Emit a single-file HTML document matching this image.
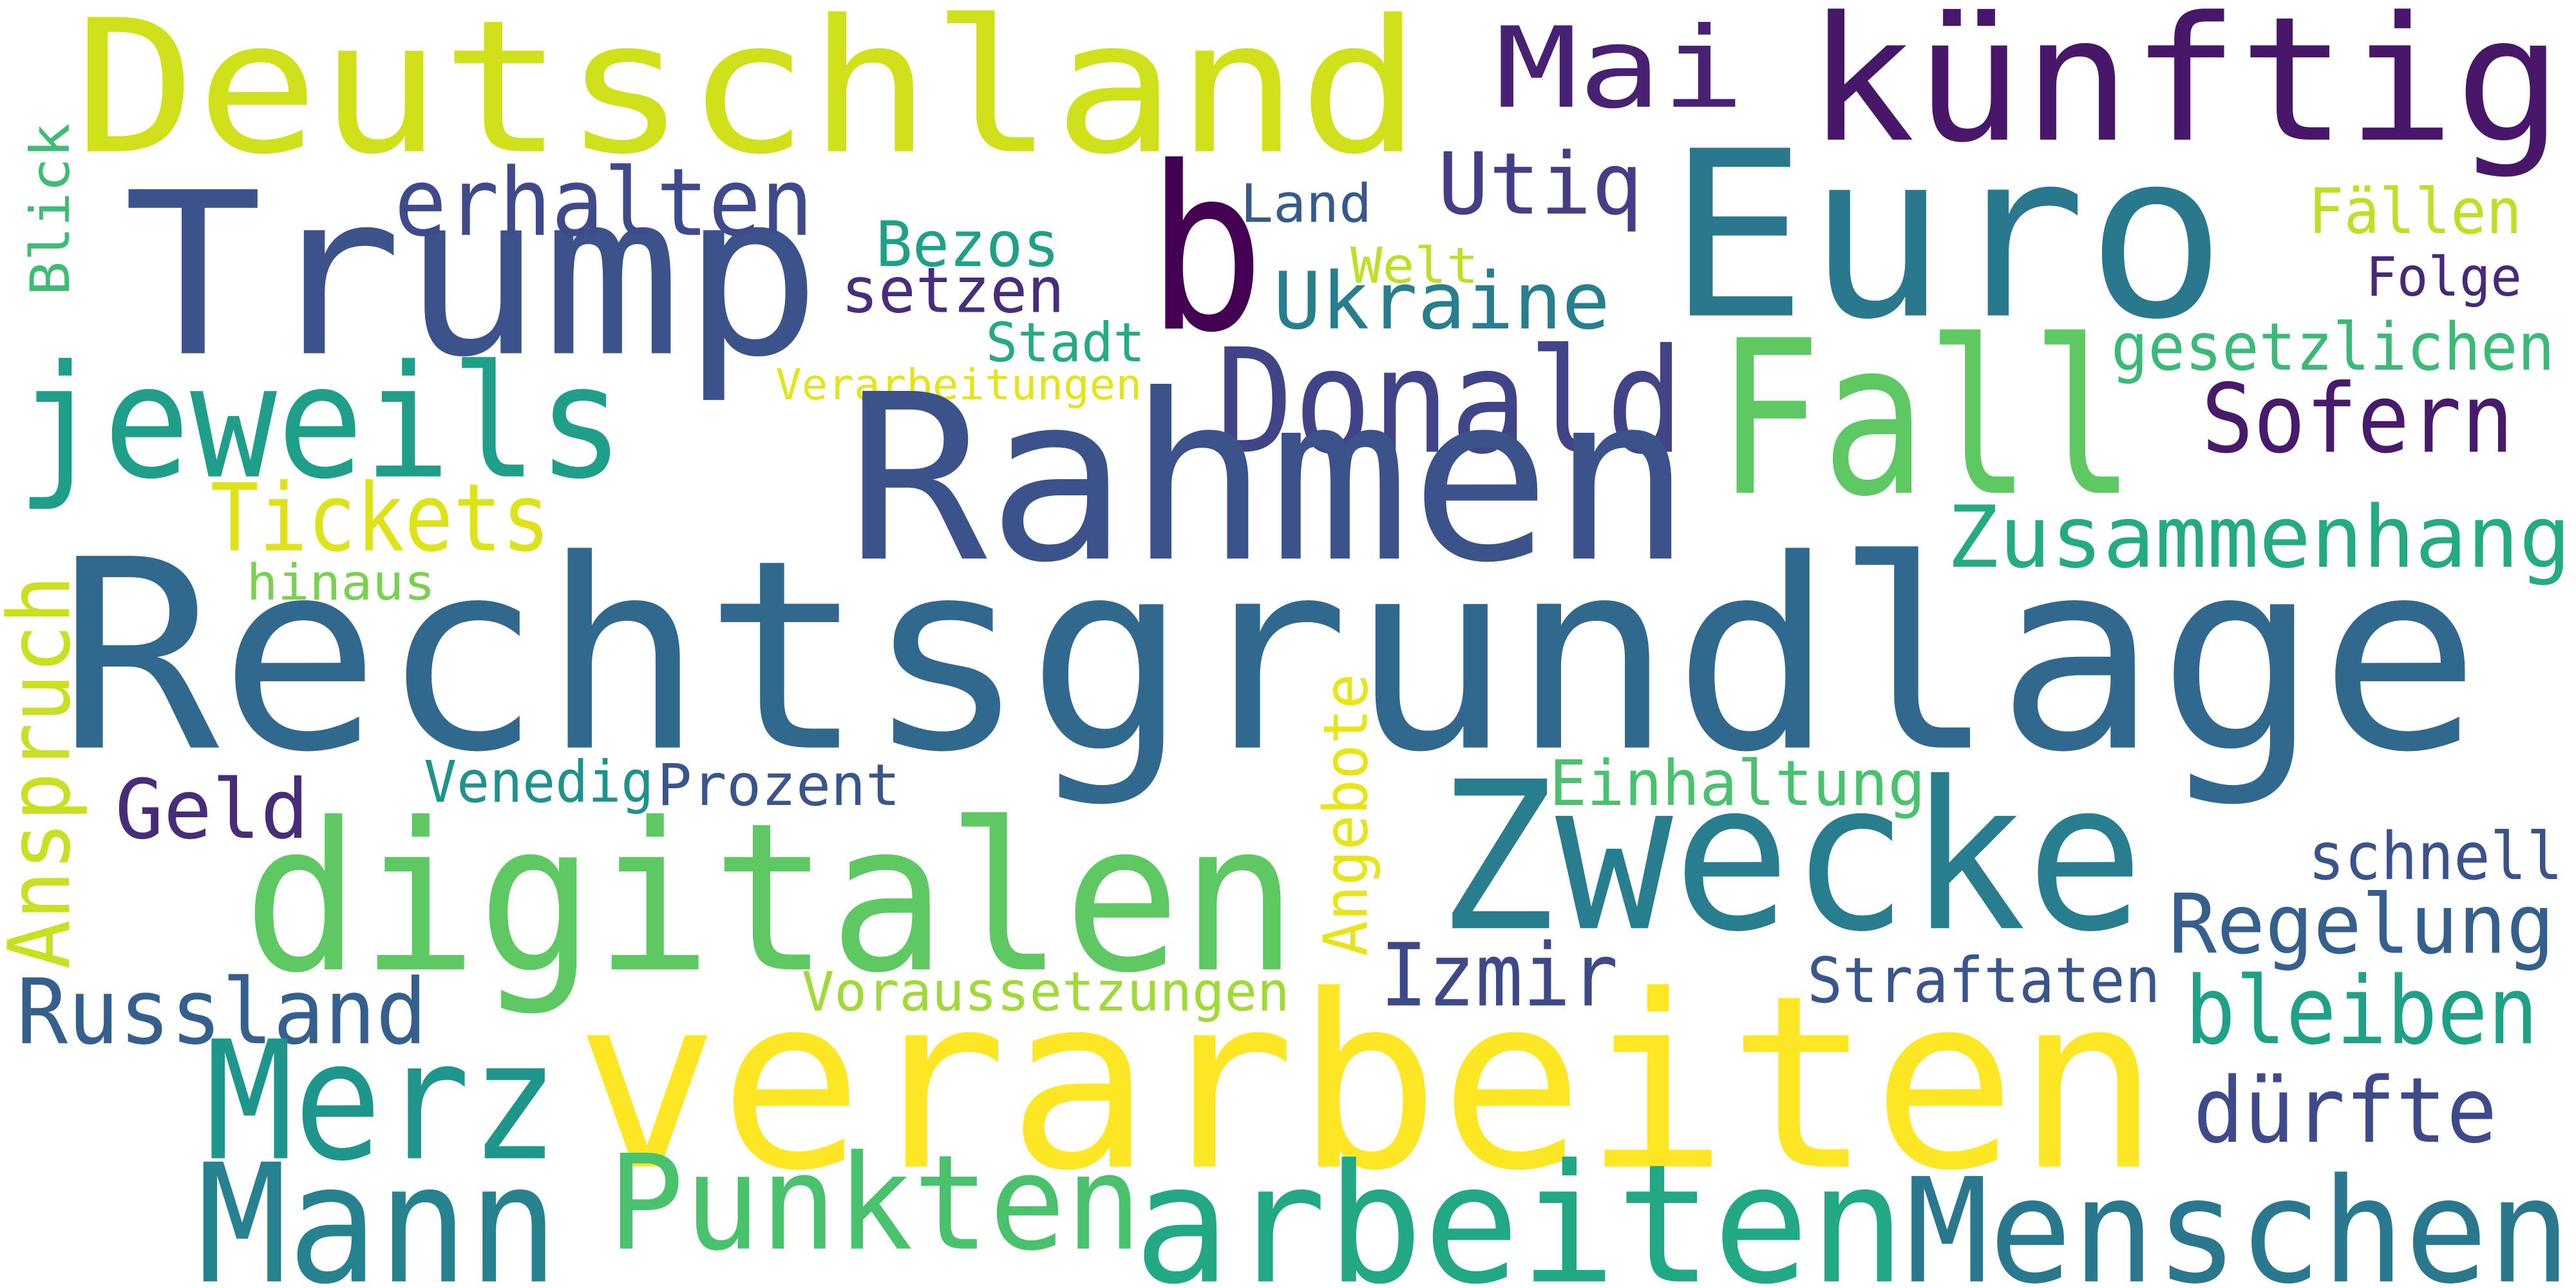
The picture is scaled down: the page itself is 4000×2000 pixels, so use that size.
<!DOCTYPE html>
<html><head><meta charset="utf-8"><style>
html,body{margin:0;padding:0;background:#fff;}
svg{display:block}
text{font-family:"DejaVu Sans Mono","Liberation Mono",monospace;}
</style></head><body>
<svg width="4000" height="2000" viewBox="0 0 1568 784" xmlns="http://www.w3.org/2000/svg">
<rect width="1568" height="784" fill="#fff"/>
<g lengthAdjust="spacingAndGlyphs">
<text x="45" y="92" font-size="112" fill="#d0e11c" textLength="820" lengthAdjust="spacingAndGlyphs">Deutschland</text>
<text x="1100" y="85" font-size="105" fill="#481769" textLength="460" lengthAdjust="spacingAndGlyphs">künftig</text>
<text x="910" y="65" font-size="68" fill="#482173" textLength="152" lengthAdjust="spacingAndGlyphs">Mai</text>
<text x="75" y="215" font-size="137" fill="#3b528b" textLength="425" lengthAdjust="spacingAndGlyphs">Trump</text>
<text x="698" y="200" font-size="138" fill="#440154" textLength="72" lengthAdjust="spacingAndGlyphs">b</text>
<text x="1015" y="192" font-size="140" fill="#2a788e" textLength="340" lengthAdjust="spacingAndGlyphs">Euro</text>
<text x="240" y="143" font-size="57" fill="#3e4a89" textLength="255" lengthAdjust="spacingAndGlyphs">erhalten</text>
<text x="875" y="130" font-size="52" fill="#433e85" textLength="125" lengthAdjust="spacingAndGlyphs">Utiq</text>
<text x="755" y="135" font-size="32" fill="#38598c" textLength="80" lengthAdjust="spacingAndGlyphs">Land</text>
<text x="533" y="162" font-size="38" fill="#1fa187" textLength="112" lengthAdjust="spacingAndGlyphs">Bezos</text>
<text x="822" y="172" font-size="30" fill="#bddf26" textLength="78" lengthAdjust="spacingAndGlyphs">Welt</text>
<text x="1405" y="142" font-size="38" fill="#bddf26" textLength="130" lengthAdjust="spacingAndGlyphs">Fällen</text>
<text x="1440" y="180" font-size="33" fill="#482878" textLength="95" lengthAdjust="spacingAndGlyphs">Folge</text>
<text transform="translate(42,180) rotate(-90)" font-size="33" fill="#3fbc73" textLength="105" lengthAdjust="spacingAndGlyphs">Blick</text>
<text x="512" y="190" font-size="38" fill="#472d7b" textLength="136" lengthAdjust="spacingAndGlyphs">setzen</text>
<text x="775" y="200" font-size="48" fill="#277f8e" textLength="205" lengthAdjust="spacingAndGlyphs">Ukraine</text>
<text x="600" y="220" font-size="33" fill="#25ab82" textLength="97" lengthAdjust="spacingAndGlyphs">Stadt</text>
<text x="472" y="243" font-size="26" fill="#e5e419" textLength="223" lengthAdjust="spacingAndGlyphs">Verarbeitungen</text>
<text x="1285" y="225" font-size="40" fill="#3aba76" textLength="270" lengthAdjust="spacingAndGlyphs">gesetzlichen</text>
<text x="740" y="275" font-size="88" fill="#414487" textLength="285" lengthAdjust="spacingAndGlyphs">Donald</text>
<text x="1045" y="300" font-size="130" fill="#5ec962" textLength="255" lengthAdjust="spacingAndGlyphs">Fall</text>
<text x="10" y="290" font-size="95" fill="#1f9e89" textLength="370" lengthAdjust="spacingAndGlyphs">jeweils</text>
<text x="1340" y="275" font-size="58" fill="#481a6c" textLength="190" lengthAdjust="spacingAndGlyphs">Sofern</text>
<text x="515" y="340" font-size="140" fill="#3b528b" textLength="515" lengthAdjust="spacingAndGlyphs">Rahmen</text>
<text x="128" y="335" font-size="57" fill="#dde318" textLength="207" lengthAdjust="spacingAndGlyphs">Tickets</text>
<text x="1185" y="345" font-size="52" fill="#25ab82" textLength="380" lengthAdjust="spacingAndGlyphs">Zusammenhang</text>
<text x="150" y="365" font-size="30" fill="#7ad151" textLength="115" lengthAdjust="spacingAndGlyphs">hinaus</text>
<text x="35" y="455" font-size="160" fill="#31688e" textLength="1475" lengthAdjust="spacingAndGlyphs">Rechtsgrundlage</text>
<text transform="translate(42,590) rotate(-90)" font-size="52" fill="#c8e020" textLength="240" lengthAdjust="spacingAndGlyphs">Anspruch</text>
<text transform="translate(832,582) rotate(-90)" font-size="37" fill="#e7e419" textLength="172" lengthAdjust="spacingAndGlyphs">Angebote</text>
<text x="258" y="488" font-size="35" fill="#20928c" textLength="140" lengthAdjust="spacingAndGlyphs">Venedig</text>
<text x="400" y="490" font-size="35" fill="#39558c" textLength="148" lengthAdjust="spacingAndGlyphs">Prozent</text>
<text x="70" y="510" font-size="50" fill="#472c7a" textLength="118" lengthAdjust="spacingAndGlyphs">Geld</text>
<text x="943" y="490" font-size="38" fill="#4ac16d" textLength="229" lengthAdjust="spacingAndGlyphs">Einhaltung</text>
<text x="148" y="590" font-size="125" fill="#5ec962" textLength="642" lengthAdjust="spacingAndGlyphs">digitalen</text>
<text x="875" y="565" font-size="125" fill="#287d8e" textLength="430" lengthAdjust="spacingAndGlyphs">Zwecke</text>
<text x="1405" y="535" font-size="40" fill="#3b528b" textLength="155" lengthAdjust="spacingAndGlyphs">schnell</text>
<text x="1320" y="580" font-size="50" fill="#355f8d" textLength="235" lengthAdjust="spacingAndGlyphs">Regelung</text>
<text x="840" y="612" font-size="53" fill="#3e4989" textLength="145" lengthAdjust="spacingAndGlyphs">Izmir</text>
<text x="488" y="615" font-size="33" fill="#a0da39" textLength="297" lengthAdjust="spacingAndGlyphs">Voraussetzungen</text>
<text x="1100" y="610" font-size="38" fill="#3a548c" textLength="215" lengthAdjust="spacingAndGlyphs">Straftaten</text>
<text x="10" y="635" font-size="55" fill="#355f8d" textLength="250" lengthAdjust="spacingAndGlyphs">Russland</text>
<text x="1330" y="635" font-size="57" fill="#1fa187" textLength="215" lengthAdjust="spacingAndGlyphs">bleiben</text>
<text x="125" y="705" font-size="100" fill="#1f968b" textLength="215" lengthAdjust="spacingAndGlyphs">Merz</text>
<text x="350" y="710" font-size="146" fill="#fde725" textLength="965" lengthAdjust="spacingAndGlyphs">verarbeiten</text>
<text x="1335" y="695" font-size="55" fill="#3e4a89" textLength="185" lengthAdjust="spacingAndGlyphs">dürfte</text>
<text x="120" y="780" font-size="100" fill="#26828e" textLength="220" lengthAdjust="spacingAndGlyphs">Mann</text>
<text x="370" y="760" font-size="80" fill="#4ac16d" textLength="325" lengthAdjust="spacingAndGlyphs">Punkten</text>
<text x="690" y="780" font-size="100" fill="#22a884" textLength="470" lengthAdjust="spacingAndGlyphs">arbeiten</text>
<text x="1160" y="780" font-size="88" fill="#2a788e" textLength="405" lengthAdjust="spacingAndGlyphs">Menschen</text>
</g>
</svg>
</body></html>
